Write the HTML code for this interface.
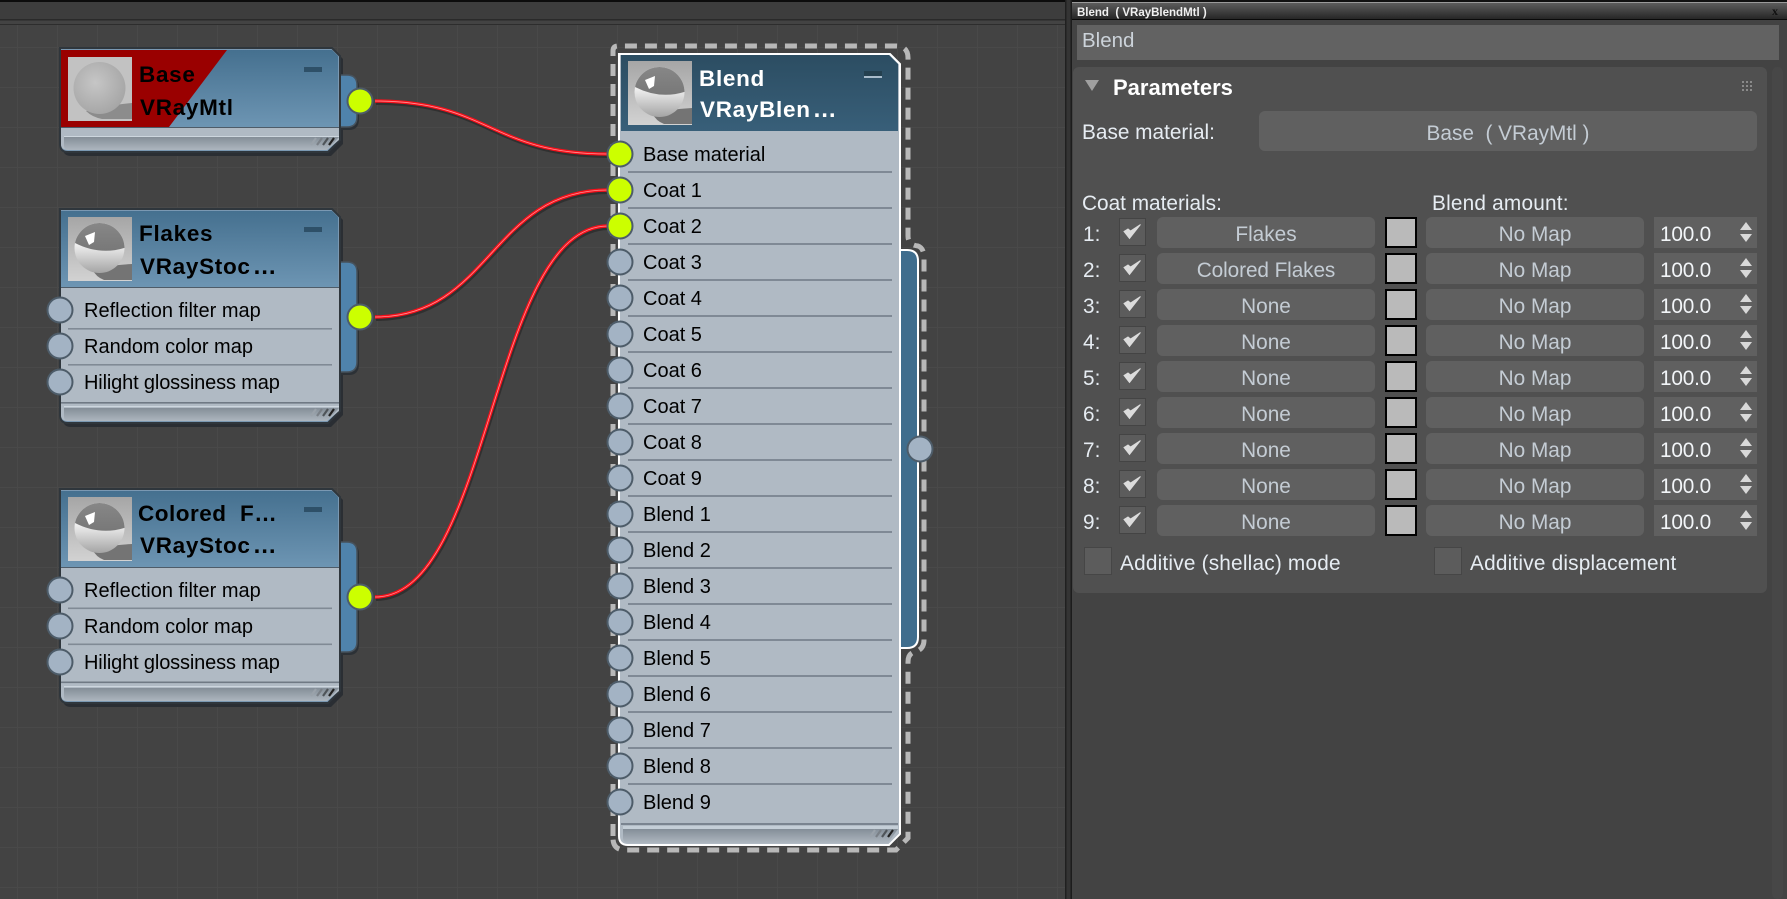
<!DOCTYPE html>
<html><head><meta charset="utf-8"><title>Blend</title>
<style>
html,body{margin:0;padding:0;background:#434343;width:1787px;height:899px;overflow:hidden}
svg{display:block}
text{font-family:"Liberation Sans",Arial,sans-serif;white-space:pre}
.r{font-size:20px;fill:#000}
.h{font-size:22.5px;font-weight:bold;fill:#000;letter-spacing:.7px}
.hw{font-size:22.5px;font-weight:bold;fill:#fff;letter-spacing:.7px}
.l{font-size:20.8px;fill:#e6ecf2}
.b{font-size:20.8px;fill:#c4ccd4;text-anchor:middle}
.v{font-size:20.8px;fill:#f2f5f8;letter-spacing:-.2px}
</style></head><body>
<svg width="1787" height="899" viewBox="0 0 1787 899" xmlns="http://www.w3.org/2000/svg">
<defs>
<pattern id="grid" x="17" y="47" width="40" height="40" patternUnits="userSpaceOnUse"><path d="M0.5,0V40M0,0.5H40" stroke="#494949" stroke-width="1" fill="none"/></pattern>
<linearGradient id="hd" x1="0" y1="0" x2="0" y2="1"><stop offset="0" stop-color="#45708f"/><stop offset="1" stop-color="#6d95b3"/></linearGradient>
<linearGradient id="hds" x1="0" y1="0" x2="0" y2="1"><stop offset="0" stop-color="#2c4d62"/><stop offset="1" stop-color="#385f79"/></linearGradient>
<linearGradient id="ft" x1="0" y1="0" x2="0" y2="1"><stop offset="0" stop-color="#848e98"/><stop offset="1" stop-color="#adb6bf"/></linearGradient>
<linearGradient id="tt" x1="0" y1="0" x2="0" y2="1"><stop offset="0" stop-color="#5c5c5c"/><stop offset="1" stop-color="#262626"/></linearGradient>
<linearGradient id="tbg" x1="0" y1="0" x2="0" y2="1"><stop offset="0" stop-color="#a6a6a6"/><stop offset="1" stop-color="#d2d2d2"/></linearGradient>
<linearGradient id="sh" x1="0" y1="0" x2="0" y2="1"><stop offset="0" stop-color="#ffffff"/><stop offset=".4" stop-color="#f4f4f4"/><stop offset="1" stop-color="#a4a4a4"/></linearGradient>
<radialGradient id="mat" cx=".42" cy=".4" r=".7"><stop offset="0" stop-color="#c6c6c6"/><stop offset="1" stop-color="#a2a2a2"/></radialGradient>
<linearGradient id="top" x1="0" y1="0" x2="0" y2="1"><stop offset="0" stop-color="#8a8a8a"/><stop offset="1" stop-color="#787878"/></linearGradient>
<clipPath id="sph"><circle cx="31.5" cy="31" r="25"/></clipPath>
<symbol id="gloss" width="64" height="64" viewBox="0 0 64 64">
<rect width="64" height="64" fill="url(#tbg)"/>
<path d="M24,52 Q44,48 64,47 V63 H36 Q28,60 24,52Z" fill="#747474"/>
<circle cx="31.5" cy="31" r="25" fill="url(#sh)"/>
<path d="M0,0 H64 V28 Q32,42 0,22Z" fill="url(#top)" clip-path="url(#sph)"/>
<path d="M17,19 L27,15 L26,25 L21,28Z" fill="#fff"/>
</symbol>
<symbol id="mattb" width="64" height="64" viewBox="0 0 64 64">
<rect width="64" height="64" fill="#c2c2c2"/>
<path d="M18,54 Q40,48 64,46 V62 H34 Q24,60 18,54Z" fill="#8c8c8c"/>
<circle cx="31.5" cy="31" r="26" fill="url(#mat)"/>
</symbol>
<g id="hatch" fill="none" stroke-width="2.2">
<path d="M0,7 L5,0" stroke="#9aa2aa"/><path d="M6,7 L11,0" stroke="#7a8087"/><path d="M12,7 L17,0" stroke="#50555a"/><path d="M18,7 L23,0" stroke="#222"/>
</g>
<g id="rowicons">
<rect x="1119.5" y="-15" width="26" height="27" fill="#5c5c5c" stroke="#444"/>
<path d="M1124,-2 L1129.5,5 L1140.5,-9 L1130.5,-2.5 L1128,-4.5Z" fill="#dcdcdc" stroke="#dcdcdc" stroke-width="1"/>
<rect x="1157" y="-16.5" width="218" height="31" rx="6" fill="#606060"/>
<rect x="1386" y="-15.5" width="30" height="29" fill="#bababa" stroke="#000" stroke-width="2"/>
<rect x="1426" y="-16.5" width="218" height="31" rx="6" fill="#606060"/>
<rect x="1654" y="-16.5" width="103" height="31" fill="#606060"/>
<path d="M1740,-3.5 L1746,-11.5 L1752,-3.5Z M1740,0.5 L1752,0.5 L1746,8.5Z" fill="#d8d8d8"/>
</g>
</defs>

<rect width="1787" height="899" fill="#434343"/>
<rect x="0" y="24" width="1066" height="875" fill="url(#grid)"/>
<rect x="0" y="0" width="1066" height="2" fill="#0c0c0c"/>
<rect x="0" y="2" width="1066" height="17" fill="#3d3d3d"/>
<rect x="0" y="19" width="1066" height="1.5" fill="#2a2a2a"/>
<rect x="0" y="24" width="1066" height="1" fill="#2d2d2d"/>

<!-- wires -->
<g fill="none">
<g stroke="#303030" stroke-width="4" transform="translate(1,2)">
<path d="M375,101 C490,101 490,154 608,154"/><path d="M375,317 C491,317 491,190 608,190"/><path d="M375,597 C491,597 491,226 608,226"/>
</g>
<g stroke="#f8101a" stroke-width="3.4">
<path d="M375,101 C490,101 490,154 608,154"/><path d="M375,317 C491,317 491,190 608,190"/><path d="M375,597 C491,597 491,226 608,226"/>
</g>
<g stroke="#ff9094" stroke-width=".8">
<path d="M375,101 C490,101 490,154 608,154"/><path d="M375,317 C491,317 491,190 608,190"/><path d="M375,597 C491,597 491,226 608,226"/>
</g>
</g>

<!-- Base node -->
<path d="M62,48 H333 L342,57 V142 L330,154 H70 Q62,154 62,146Z" fill="#2a2e33" transform="translate(1,2)"/>
<path d="M340,77 H349 Q359,77 359,87 V119 Q359,130 349,130 H340Z" fill="#2c3136"/>
<path d="M339,75 H347 Q357,75 357,85 V117 Q357,127 347,127 H339Z" fill="#4f83ac" stroke="#47525c" stroke-width="1.5"/>
<path d="M60,48 H332 L340,56 V140 L328,152 H68 Q60,152 60,144Z" fill="#7a98b2" stroke="#2f363c" stroke-width="2"/>
<path d="M61,50 H332 L338,56 V127 H61Z" fill="url(#hd)"/>
<path d="M61,50 H227 L169,127 H61Z" fill="#9a0000"/>
<rect x="61" y="127" width="278" height="1.5" fill="#4e5c69"/>
<path d="M61,128 H339 V140 L327,150 H68 Q61,150 61,144Z" fill="#b0bac4"/>
<rect x="64" y="136" width="275" height="1" fill="#cdd6de"/>
<path d="M64,137 H339 L327,150 H69 Q64,150 64,146Z" fill="url(#ft)"/>
<use href="#hatch" x="311" y="138"/>
<use href="#mattb" x="68" y="57"/>
<rect x="304" y="67" width="18" height="5" fill="#2e5068"/>
<text class="h" x="139" y="82">Base</text>
<text class="h" x="140" y="115">VRayMtl</text>
<circle cx="360" cy="101" r="12.5" fill="#ccff00" stroke="#4d5c69" stroke-width="2"/>

<!-- Flakes node -->
<path d="M62,209 H333 L342,218 V413 L330,425 H70 Q62,425 62,417Z" fill="#2a2e33" transform="translate(1,2)"/>
<path d="M340,264 H349 Q359,264 359,274 V364 Q359,375 349,375 H340Z" fill="#2c3136"/>
<path d="M339,262 H347 Q357,262 357,272 V362 Q357,372 347,372 H339Z" fill="#4f83ac" stroke="#47525c" stroke-width="1.5"/>
<path d="M60,209 H332 L340,217 V411 L328,423 H68 Q60,423 60,415Z" fill="#7a98b2" stroke="#2f363c" stroke-width="2"/>
<path d="M61,211 H332 L338,217 V287 H61Z" fill="url(#hd)"/>
<rect x="61" y="287" width="278" height="1.5" fill="#4e5c69"/>
<path d="M61,288 H339 V411 L327,421 H68 Q61,421 61,415Z" fill="#b0bac4"/>
<rect x="68" y="328" width="264" height="1.6" fill="#808a95"/><rect x="68" y="364" width="264" height="1.6" fill="#808a95"/>
<rect x="61" y="402" width="278" height="1.6" fill="#6f7984"/>
<rect x="64" y="406" width="275" height="1" fill="#cdd6de"/>
<path d="M64,408 H339 L327,421 H69 Q64,421 64,417Z" fill="url(#ft)"/>
<use href="#hatch" x="311" y="409"/>
<use href="#gloss" x="68" y="217"/>
<rect x="304" y="227" width="18" height="5" fill="#2e5068"/>
<text class="h" x="139" y="241">Flakes</text>
<text class="h" x="140" y="274">VRayStoc<tspan dx="2" style="font-size:24px">…</tspan></text>
<text class="r" x="84" y="317">Reflection filter map</text>
<text class="r" x="84" y="353">Random color map</text>
<text class="r" x="84" y="389" style="letter-spacing:-.15px">Hilight glossiness map</text>
<g fill="#a3b3c4" stroke="#4d5c69" stroke-width="2"><circle cx="60" cy="310" r="12.5"/><circle cx="60" cy="346" r="12.5"/><circle cx="60" cy="382" r="12.5"/></g>
<circle cx="360" cy="317" r="12.5" fill="#ccff00" stroke="#4d5c69" stroke-width="2"/>

<!-- Colored Flakes node -->
<path d="M62,489 H333 L342,498 V693 L330,705 H70 Q62,705 62,697Z" fill="#2a2e33" transform="translate(1,2)"/>
<path d="M340,544 H349 Q359,544 359,554 V644 Q359,655 349,655 H340Z" fill="#2c3136"/>
<path d="M339,542 H347 Q357,542 357,552 V642 Q357,652 347,652 H339Z" fill="#4f83ac" stroke="#47525c" stroke-width="1.5"/>
<path d="M60,489 H332 L340,497 V691 L328,703 H68 Q60,703 60,695Z" fill="#7a98b2" stroke="#2f363c" stroke-width="2"/>
<path d="M61,491 H332 L338,497 V567 H61Z" fill="url(#hd)"/>
<rect x="61" y="567" width="278" height="1.5" fill="#4e5c69"/>
<path d="M61,568 H339 V691 L327,701 H68 Q61,701 61,695Z" fill="#b0bac4"/>
<rect x="68" y="607.5" width="264" height="1.6" fill="#808a95"/><rect x="68" y="643.5" width="264" height="1.6" fill="#808a95"/>
<rect x="61" y="681.5" width="278" height="1.6" fill="#6f7984"/>
<rect x="64" y="686" width="275" height="1" fill="#cdd6de"/>
<path d="M64,688 H339 L327,701 H69 Q64,701 64,697Z" fill="url(#ft)"/>
<use href="#hatch" x="311" y="689"/>
<use href="#gloss" x="68" y="497"/>
<rect x="304" y="507" width="18" height="5" fill="#2e5068"/>
<text class="h" x="138" y="521" style="letter-spacing:.5px">Colored  F…</text>
<text class="h" x="140" y="553">VRayStoc<tspan dx="2" style="font-size:24px">…</tspan></text>
<text class="r" x="84" y="597">Reflection filter map</text>
<text class="r" x="84" y="633">Random color map</text>
<text class="r" x="84" y="669" style="letter-spacing:-.15px">Hilight glossiness map</text>
<g fill="#a3b3c4" stroke="#4d5c69" stroke-width="2"><circle cx="60" cy="590" r="12.5"/><circle cx="60" cy="626" r="12.5"/><circle cx="60" cy="662" r="12.5"/></g>
<circle cx="360" cy="597" r="12.5" fill="#ccff00" stroke="#4d5c69" stroke-width="2"/>

<!-- Blend node selection -->
<path d="M613,836 V51 Q613,46 618,46 H896 Q908,46 908,58 V236 Q908,245 918,246 Q924,248 924,258 V640 Q924,650 914,652 Q908,654 908,662 V838 L896,850 H625 Q613,850 613,838" fill="none" stroke="#b8b8b8" stroke-width="5" stroke-dasharray="12 8"/>
<path d="M899,250 H907 Q918,250 918,261 V637 Q918,648 907,648 H899Z" fill="#3f6d8d" stroke="#fff" stroke-width="2"/>
<path d="M619,54 H890 L900,64 V834 L889,845 H628 Q619,845 619,836Z" fill="#b0bac4" stroke="#fff" stroke-width="2"/>
<path d="M621,55 H889 L898,64 V131 H621Z" fill="url(#hds)"/>
<rect x="621" y="823" width="277" height="2" fill="#7a8490"/>
<rect x="623" y="826" width="275" height="3" fill="#c4ced7"/>
<path d="M623,829 H898 L888,843 H629 Q623,843 623,838Z" fill="url(#ft)"/>
<use href="#hatch" x="870" y="830"/>
<use href="#gloss" x="628" y="61"/>
<rect x="864" y="71" width="18" height="5" fill="#24404f"/><rect x="864" y="76" width="18" height="2" fill="#a9bccb"/>
<text class="hw" x="699" y="86">Blend</text>
<text class="hw" x="700" y="117">VRayBlen<tspan dx="2" style="font-size:24px">…</tspan></text>
<g fill="#7f8995">
<rect x="628" y="171" width="264" height="2"/><rect x="628" y="207" width="264" height="2"/><rect x="628" y="243" width="264" height="2"/><rect x="628" y="279" width="264" height="2"/><rect x="628" y="315" width="264" height="2"/><rect x="628" y="351" width="264" height="2"/><rect x="628" y="387" width="264" height="2"/><rect x="628" y="423" width="264" height="2"/><rect x="628" y="459" width="264" height="2"/><rect x="628" y="495" width="264" height="2"/><rect x="628" y="531" width="264" height="2"/><rect x="628" y="567" width="264" height="2"/><rect x="628" y="603" width="264" height="2"/><rect x="628" y="639" width="264" height="2"/><rect x="628" y="675" width="264" height="2"/><rect x="628" y="711" width="264" height="2"/><rect x="628" y="747" width="264" height="2"/><rect x="628" y="783" width="264" height="2"/>
</g>
<text class="r" x="643" y="161">Base material</text>
<text class="r" x="643" y="197">Coat 1</text>
<text class="r" x="643" y="233">Coat 2</text>
<text class="r" x="643" y="269">Coat 3</text>
<text class="r" x="643" y="305">Coat 4</text>
<text class="r" x="643" y="341">Coat 5</text>
<text class="r" x="643" y="377">Coat 6</text>
<text class="r" x="643" y="413">Coat 7</text>
<text class="r" x="643" y="449">Coat 8</text>
<text class="r" x="643" y="485">Coat 9</text>
<text class="r" x="643" y="521">Blend 1</text>
<text class="r" x="643" y="557">Blend 2</text>
<text class="r" x="643" y="593">Blend 3</text>
<text class="r" x="643" y="629">Blend 4</text>
<text class="r" x="643" y="665">Blend 5</text>
<text class="r" x="643" y="701">Blend 6</text>
<text class="r" x="643" y="737">Blend 7</text>
<text class="r" x="643" y="773">Blend 8</text>
<text class="r" x="643" y="809">Blend 9</text>
<g stroke="#4d5c69" stroke-width="2">
<g fill="#ccff00"><circle cx="620" cy="154" r="12.5"/><circle cx="620" cy="190" r="12.5"/><circle cx="620" cy="226" r="12.5"/></g>
<g fill="#a3b3c4"><circle cx="620" cy="262" r="12.5"/><circle cx="620" cy="298" r="12.5"/><circle cx="620" cy="334" r="12.5"/><circle cx="620" cy="370" r="12.5"/><circle cx="620" cy="406" r="12.5"/><circle cx="620" cy="442" r="12.5"/><circle cx="620" cy="478" r="12.5"/><circle cx="620" cy="514" r="12.5"/><circle cx="620" cy="550" r="12.5"/><circle cx="620" cy="586" r="12.5"/><circle cx="620" cy="622" r="12.5"/><circle cx="620" cy="658" r="12.5"/><circle cx="620" cy="694" r="12.5"/><circle cx="620" cy="730" r="12.5"/><circle cx="620" cy="766" r="12.5"/><circle cx="620" cy="802" r="12.5"/><circle cx="920" cy="449" r="12.5"/></g>
</g>

<!-- Divider -->
<rect x="1065" y="0" width="1.5" height="899" fill="#202020"/>
<rect x="1066.5" y="0" width="4.5" height="899" fill="#343434"/>
<rect x="1070.5" y="0" width="1.5" height="899" fill="#1c1c1c"/>

<!-- Right panel -->
<rect x="1072" y="0" width="715" height="899" fill="#434343"/>
<rect x="1072" y="0" width="715" height="2" fill="#111"/>
<rect x="1072" y="2" width="715" height="1" fill="#9a9a9a"/>
<rect x="1072" y="3" width="715" height="16" fill="url(#tt)"/>
<rect x="1072" y="19" width="715" height="1" fill="#0a0a0a"/>
<text x="1077" y="16" style="font-size:11.5px;font-weight:bold;fill:#f0f0f0">Blend  ( VRayBlendMtl )</text>
<text x="1772" y="15" style="font-size:12px;font-weight:bold;fill:#111;font-family:'Liberation Serif',serif">x</text>
<rect x="1077" y="25" width="702" height="35" fill="#626262"/>
<text x="1082" y="47" style="font-size:20.5px;fill:#ccd3da">Blend</text>
<rect x="1073" y="67" width="694" height="526" rx="6" fill="#505050"/>
<rect x="1772" y="67" width="11" height="832" rx="5" fill="#474747"/>
<path d="M1085,80 H1099 L1092,91Z" fill="#a0a0a0"/>
<text x="1113" y="95" style="font-size:22px;font-weight:bold;fill:#fff">Parameters</text>
<g fill="#8a8a8a"><rect x="1742" y="81" width="2" height="2"/><rect x="1746" y="81" width="2" height="2"/><rect x="1750" y="81" width="2" height="2"/><rect x="1742" y="85" width="2" height="2"/><rect x="1746" y="85" width="2" height="2"/><rect x="1750" y="85" width="2" height="2"/><rect x="1742" y="89" width="2" height="2"/><rect x="1746" y="89" width="2" height="2"/><rect x="1750" y="89" width="2" height="2"/></g>
<text class="l" x="1082" y="139">Base material:</text>
<rect x="1259" y="111" width="498" height="40" rx="6" fill="#606060"/>
<text class="b" x="1508" y="140">Base  ( VRayMtl )</text>
<text class="l" x="1082" y="210">Coat materials:</text>
<text class="l" x="1432" y="210" style="letter-spacing:.2px">Blend amount:</text>

<use href="#rowicons" y="233.5"/><use href="#rowicons" y="269.5"/><use href="#rowicons" y="305.5"/><use href="#rowicons" y="341.5"/><use href="#rowicons" y="377.5"/><use href="#rowicons" y="413.5"/><use href="#rowicons" y="449.5"/><use href="#rowicons" y="485.5"/><use href="#rowicons" y="521.5"/>

<text class="l" x="1083" y="241">1:</text><text class="b" x="1266" y="241">Flakes</text><text class="b" x="1535" y="241">No Map</text><text class="v" x="1660" y="241">100.0</text>
<text class="l" x="1083" y="277">2:</text><text class="b" x="1266" y="277" style="letter-spacing:-.1px">Colored Flakes</text><text class="b" x="1535" y="277">No Map</text><text class="v" x="1660" y="277">100.0</text>
<text class="l" x="1083" y="313">3:</text><text class="b" x="1266" y="313">None</text><text class="b" x="1535" y="313">No Map</text><text class="v" x="1660" y="313">100.0</text>
<text class="l" x="1083" y="349">4:</text><text class="b" x="1266" y="349">None</text><text class="b" x="1535" y="349">No Map</text><text class="v" x="1660" y="349">100.0</text>
<text class="l" x="1083" y="385">5:</text><text class="b" x="1266" y="385">None</text><text class="b" x="1535" y="385">No Map</text><text class="v" x="1660" y="385">100.0</text>
<text class="l" x="1083" y="421">6:</text><text class="b" x="1266" y="421">None</text><text class="b" x="1535" y="421">No Map</text><text class="v" x="1660" y="421">100.0</text>
<text class="l" x="1083" y="457">7:</text><text class="b" x="1266" y="457">None</text><text class="b" x="1535" y="457">No Map</text><text class="v" x="1660" y="457">100.0</text>
<text class="l" x="1083" y="493">8:</text><text class="b" x="1266" y="493">None</text><text class="b" x="1535" y="493">No Map</text><text class="v" x="1660" y="493">100.0</text>
<text class="l" x="1083" y="529">9:</text><text class="b" x="1266" y="529">None</text><text class="b" x="1535" y="529">No Map</text><text class="v" x="1660" y="529">100.0</text>

<rect x="1084.5" y="547.5" width="27" height="27" fill="#5c5c5c" stroke="#464646"/>
<text class="l" x="1120" y="570" style="letter-spacing:.2px">Additive (shellac) mode</text>
<rect x="1434.5" y="547.5" width="27" height="27" fill="#5c5c5c" stroke="#464646"/>
<text class="l" x="1470" y="570" style="letter-spacing:.2px">Additive displacement</text>
</svg>
</body></html>
